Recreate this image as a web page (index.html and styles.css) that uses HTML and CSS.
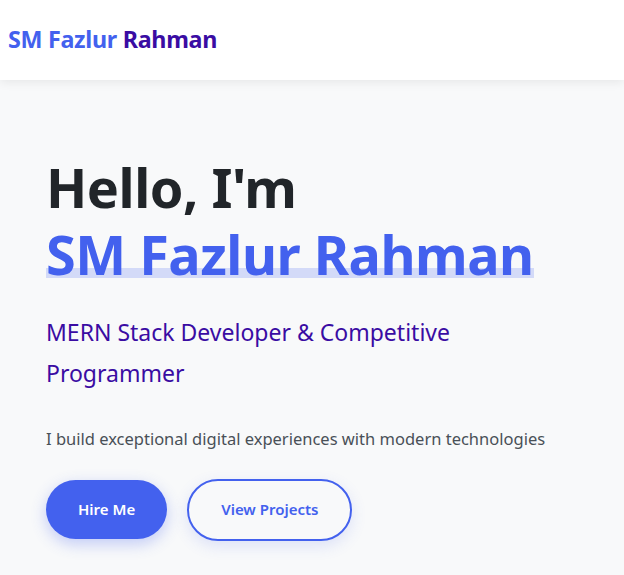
FILE: index.html
```html
<!DOCTYPE html>
<html lang="en">
<head>
<meta charset="utf-8">
<title>SM Fazlur Rahman</title>
<link rel="stylesheet" href="styles.css">
</head>
<body>
<header class="navbar">
  <div class="logo"><span class="logo-first">SM Fazlur</span> <span class="logo-last">Rahman</span></div>
</header>
<section class="hero">
  <h1 class="hero-title">Hello, I'm<br><span class="highlight">SM Fazlur Rahman</span></h1>
  <h2 class="hero-subtitle">MERN Stack Developer &amp; Competitive Programmer</h2>
  <p class="hero-text">I build exceptional digital experiences with modern technologies</p>
  <div class="hero-buttons">
    <a class="btn btn-primary" href="#">Hire Me</a>
    <a class="btn btn-outline" href="#">View Projects</a>
  </div>
</section>
</body>
</html>
```

FILE: styles.css
```css
* { box-sizing: border-box; margin: 0; padding: 0; }
html, body { height: 100%; }
body {
  font-family: "Noto Sans", "Open Sans", sans-serif;
  background: #f8f9fa;
  color: #212529;
  line-height: 1.7;
  overflow: hidden;
}
.navbar {
  height: 80px;
  background: #ffffff;
  box-shadow: 0 2px 10px rgba(0,0,0,0.08);
  display: flex;
  align-items: center;
  padding: 0 8px;
  position: relative;
  z-index: 2;
}
.logo { font-size: 23.3px; font-weight: 700; letter-spacing: -0.3px; }
.logo-first { color: #4361ee; }
.logo-last { color: #3a0ca3; }
.hero {
  padding: 74px 46px 0;
}
.hero-title {
  font-size: 54px;
  font-weight: 700;
  line-height: 1.24;
  color: #212529;
  letter-spacing: -0.5px;
}
.highlight {
  color: #4361ee;
  position: relative;
  display: inline-block;
}
.highlight::after {
  content: "";
  position: absolute;
  left: 0;
  right: 0;
  bottom: 10px;
  height: 10px;
  background: rgba(67,97,238,0.2);
  z-index: -1;
}
.hero-subtitle {
  margin-top: 24px;
  font-size: 23px;
  font-weight: 400;
  line-height: 1.78;
  color: #3a0ca3;
}
.hero-text {
  margin-top: 31px;
  font-size: 16.5px;
  color: #495057;
}
.hero-buttons {
  margin-top: 26px;
  display: flex;
  align-items: center;
  gap: 20px;
}
.btn {
  display: inline-block;
  text-decoration: none;
  font-size: 15px;
  font-weight: 600;
  padding: 16px 32px;
  border-radius: 50px;
  line-height: 27px;
}
.btn-primary {
  background: #4361ee;
  color: #ffffff;
  box-shadow: 0 5px 15px rgba(67,97,238,0.3);
}
.btn-outline {
  border: 2px solid #4361ee;
  color: #4361ee;
  padding: 15.5px 32px;
  box-shadow: 0 5px 15px rgba(67,97,238,0.15);
}
```
